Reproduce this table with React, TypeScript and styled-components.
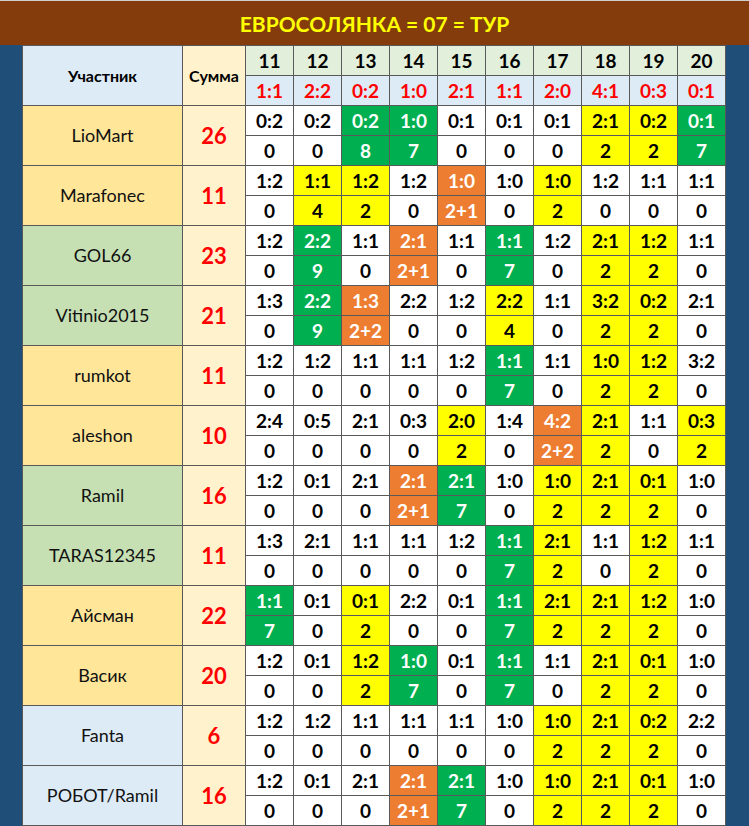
import React from 'react';
import styled, { createGlobalStyle } from 'styled-components';

type Tone = 'w' | 'g' | 'y' | 'o';
type RowTone = 'gold' | 'green' | 'blue';

interface Participant {
  name: string;
  total: number;
  tone: RowTone;
  picks: string; // "pred/pts/tone" separated by spaces
}

const GlobalStyle = createGlobalStyle`
  html, body {
    margin: 0;
    padding: 0;
    background: #1f4e79;
  }
  body {
    font-family: Lato, "Noto Sans", "Liberation Sans", sans-serif;
  }
`;

const tours = [11, 12, 13, 14, 15, 16, 17, 18, 19, 20];
const results = ['1:1', '2:2', '0:2', '1:0', '2:1', '1:1', '2:0', '4:1', '0:3', '0:1'];

const participants: Participant[] = [
  { name: 'LioMart', total: 26, tone: 'gold', picks: '0:2/0/w 0:2/0/w 0:2/8/g 1:0/7/g 0:1/0/w 0:1/0/w 0:1/0/w 2:1/2/y 0:2/2/y 0:1/7/g' },
  { name: 'Marafonec', total: 11, tone: 'gold', picks: '1:2/0/w 1:1/4/y 1:2/2/y 1:2/0/w 1:0/2+1/o 1:0/0/w 1:0/2/y 1:2/0/w 1:1/0/w 1:1/0/w' },
  { name: 'GOL66', total: 23, tone: 'green', picks: '1:2/0/w 2:2/9/g 1:1/0/w 2:1/2+1/o 1:1/0/w 1:1/7/g 1:2/0/w 2:1/2/y 1:2/2/y 1:1/0/w' },
  { name: 'Vitinio2015', total: 21, tone: 'green', picks: '1:3/0/w 2:2/9/g 1:3/2+2/o 2:2/0/w 1:2/0/w 2:2/4/y 1:1/0/w 3:2/2/y 0:2/2/y 2:1/0/w' },
  { name: 'rumkot', total: 11, tone: 'gold', picks: '1:2/0/w 1:2/0/w 1:1/0/w 1:1/0/w 1:2/0/w 1:1/7/g 1:1/0/w 1:0/2/y 1:2/2/y 3:2/0/w' },
  { name: 'aleshon', total: 10, tone: 'gold', picks: '2:4/0/w 0:5/0/w 2:1/0/w 0:3/0/w 2:0/2/y 1:4/0/w 4:2/2+2/o 2:1/2/y 1:1/0/w 0:3/2/y' },
  { name: 'Ramil', total: 16, tone: 'green', picks: '1:2/0/w 0:1/0/w 2:1/0/w 2:1/2+1/o 2:1/7/g 1:0/0/w 1:0/2/y 2:1/2/y 0:1/2/y 1:0/0/w' },
  { name: 'TARAS12345', total: 11, tone: 'green', picks: '1:3/0/w 2:1/0/w 1:1/0/w 1:1/0/w 1:2/0/w 1:1/7/g 2:1/2/y 1:1/0/w 1:2/2/y 1:1/0/w' },
  { name: 'Айсман', total: 22, tone: 'gold', picks: '1:1/7/g 0:1/0/w 0:1/2/y 2:2/0/w 0:1/0/w 1:1/7/g 2:1/2/y 2:1/2/y 1:2/2/y 1:0/0/w' },
  { name: 'Васик', total: 20, tone: 'gold', picks: '1:2/0/w 0:1/0/w 1:2/2/y 1:0/7/g 0:1/0/w 1:1/7/g 1:1/0/w 2:1/2/y 0:1/2/y 1:0/0/w' },
  { name: 'Fanta', total: 6, tone: 'blue', picks: '1:2/0/w 1:2/0/w 1:1/0/w 1:1/0/w 1:1/0/w 1:0/0/w 1:0/2/y 2:1/2/y 0:2/2/y 2:2/0/w' },
  { name: 'РОБОТ/Ramil', total: 16, tone: 'blue', picks: '1:2/0/w 0:1/0/w 2:1/0/w 2:1/2+1/o 2:1/7/g 1:0/0/w 1:0/2/y 2:1/2/y 0:1/2/y 1:0/0/w' },
];

const rowBg: Record<RowTone, string> = {
  gold: '#ffe699',
  green: '#c6e0b4',
  blue: '#ddebf7',
};

const cellBg: Record<Tone, string> = {
  w: '#ffffff',
  g: '#00b050',
  y: '#ffff00',
  o: '#ed7d31',
};

const Page = styled.div`
  width: 749px;
  min-height: 826px;
  overflow: hidden;
`;

const TitleBar = styled.header`
  height: 44px;
  border-top: 1px solid #cfcfcf;
  background: #843c0c;
  display: flex;
  align-items: center;
  justify-content: center;
  color: #ffff00;
  font-weight: 700;
  font-size: 21px;
`;

const Sheet = styled.div`
  padding: 0 23px 0 22px;
`;

const Board = styled.div`
  display: grid;
  grid-template-columns: 159px 62px repeat(10, 47px);
  grid-auto-rows: 29px;
  gap: 1px;
  padding: 1px;
  background: #595959;
  width: 704px;
  box-sizing: border-box;
`;

const Cell = styled.div`
  display: flex;
  align-items: center;
  justify-content: center;
  white-space: nowrap;
  color: #000;
`;

const HeadCell = styled(Cell)<{ $bg: string }>`
  grid-row: span 2;
  background: ${(p) => p.$bg};
  font-weight: 700;
  font-size: 16px;
`;

const TourNum = styled(Cell)`
  background: #e2efda;
  font-weight: 700;
  font-size: 19px;
`;

const ResultCell = styled(Cell)`
  background: #ddebf7;
  color: #ff0000;
  font-weight: 700;
  font-size: 19px;
`;

const NameCell = styled(Cell)<{ $tone: RowTone }>`
  grid-row: span 2;
  background: ${(p) => rowBg[p.$tone]};
  font-size: 18px;
  color: #111;
  padding-bottom: 2px;
`;

const SumCell = styled(Cell)`
  grid-row: span 2;
  background: #fff2cc;
  color: #ff0000;
  font-weight: 700;
  font-size: 22px;
`;

const PickCell = styled(Cell)<{ $tone: Tone }>`
  background: ${(p) => cellBg[p.$tone]};
  color: ${(p) => (p.$tone === 'g' || p.$tone === 'o' ? '#ffffff' : '#000000')};
  font-weight: 700;
  font-size: 19px;
`;

const ParticipantRows: React.FC<{ p: Participant }> = ({ p }) => {
  const cells = p.picks.split(' ').map((s) => {
    const [pred, pts, tone] = s.split('/');
    return { pred, pts, tone: tone as Tone };
  });
  return (
    <>
      <NameCell $tone={p.tone}>{p.name}</NameCell>
      <SumCell>{p.total}</SumCell>
      {cells.map((c, i) => (
        <PickCell key={`p${i}`} $tone={c.tone}>{c.pred}</PickCell>
      ))}
      {cells.map((c, i) => (
        <PickCell key={`s${i}`} $tone={c.tone}>{c.pts}</PickCell>
      ))}
    </>
  );
};

const App: React.FC = () => {
  return (
    <Page>
      <GlobalStyle />
      <TitleBar>ЕВРОСОЛЯНКА = 07 = ТУР</TitleBar>
      <Sheet>
        <Board>
          <HeadCell $bg="#ddebf7">Участник</HeadCell>
          <HeadCell $bg="#fff2cc">Сумма</HeadCell>
          {tours.map((t) => (
            <TourNum key={t}>{t}</TourNum>
          ))}
          {results.map((r, i) => (
            <ResultCell key={i}>{r}</ResultCell>
          ))}
          {participants.map((p) => (
            <ParticipantRows key={p.name} p={p} />
          ))}
        </Board>
      </Sheet>
    </Page>
  );
};

export default App;
